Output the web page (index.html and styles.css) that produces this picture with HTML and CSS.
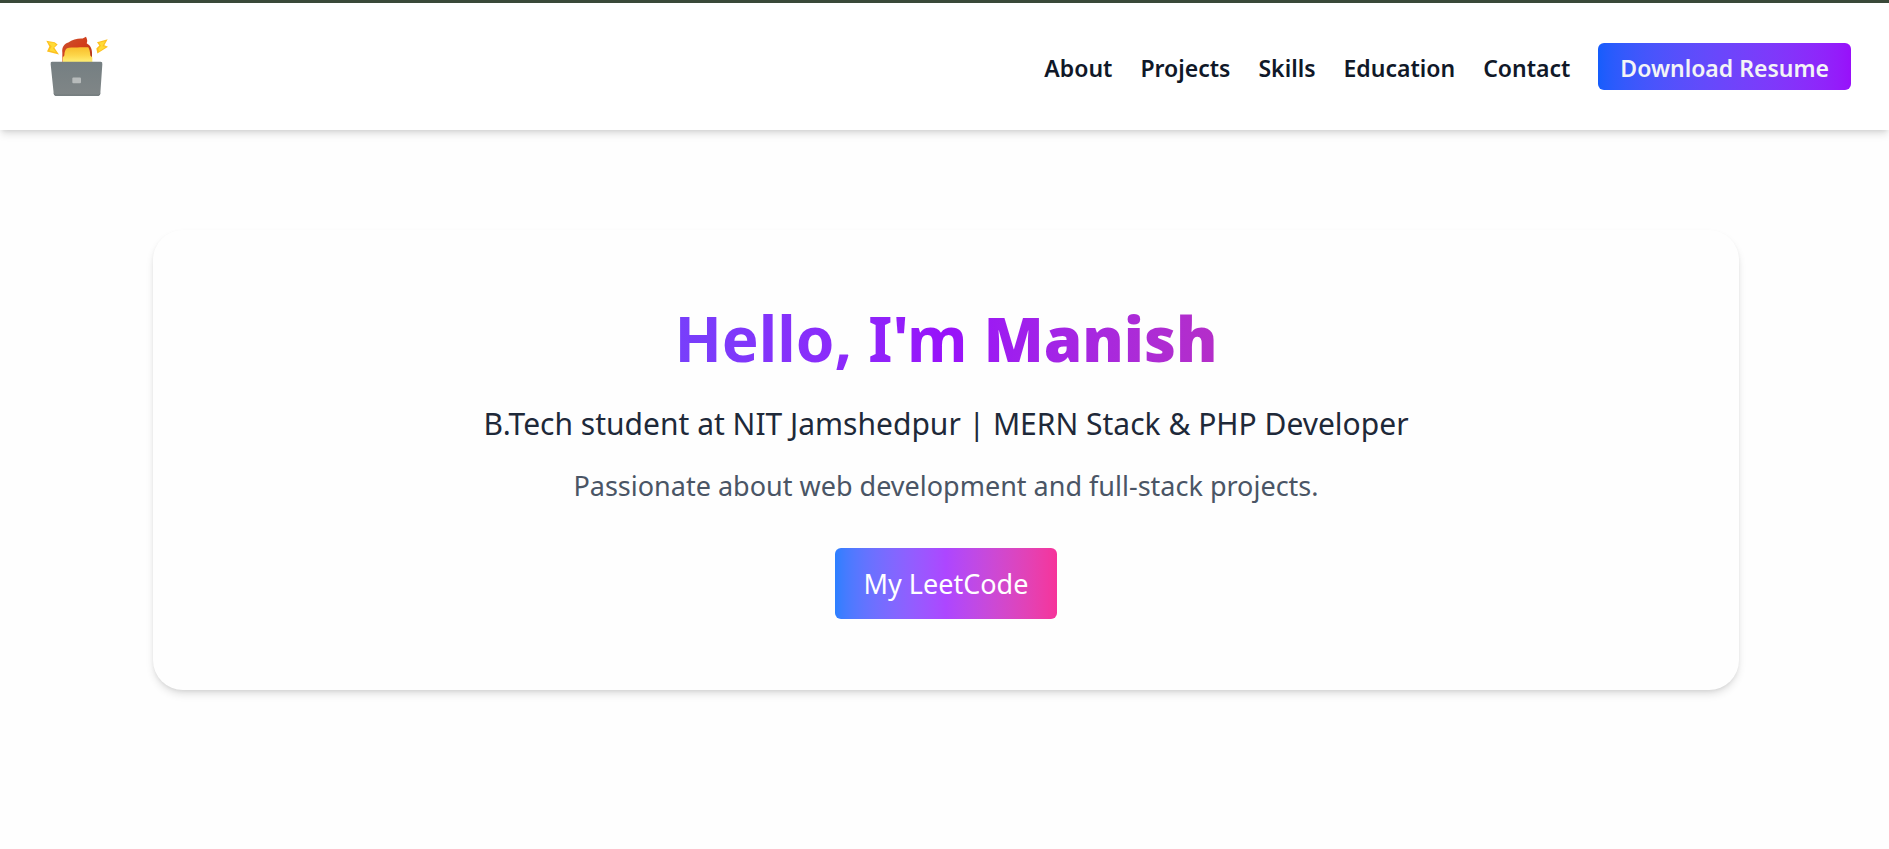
FILE: index.html
```html
<!DOCTYPE html>
<html lang="en">
<head>
<meta charset="utf-8">
<meta name="viewport" content="width=device-width, initial-scale=1">
<title>Manish | Portfolio</title>
<link rel="stylesheet" href="styles.css">
</head>
<body>
<header class="site-header">
  <a class="logo" href="#home" aria-label="Home">
    <svg class="logo-icon" viewBox="45 48 192 182" aria-hidden="true">
      <defs>
        <linearGradient id="face" x1="0" y1="0" x2="0" y2="1">
          <stop offset="0" stop-color="#f9bd2c"/>
          <stop offset=".5" stop-color="#fdd548"/>
          <stop offset="1" stop-color="#fff27a"/>
        </linearGradient>
        <linearGradient id="hair" x1="0" y1="0" x2="1" y2="1">
          <stop offset="0" stop-color="#c9532f"/>
          <stop offset=".5" stop-color="#d23c1a"/>
          <stop offset="1" stop-color="#a8371c"/>
        </linearGradient>
        <linearGradient id="laptop" x1="0" y1="0" x2="0" y2="1">
          <stop offset="0" stop-color="#757f82"/>
          <stop offset="1" stop-color="#808687"/>
        </linearGradient>
      </defs>
      <path d="M97 126V98c-2-18 6-27 18-31 12-10 30-13 43-12l10-5c4 8 5 14 2 19 11 7 16 15 16 29v26z" fill="url(#hair)"/>
      <path d="M98 128V112l5-6c0-11 3-19 8-22 14-4 46-2 64-3 4 6 5 14 6 25l6 6v16z" fill="url(#face)"/>
      <path d="M49 62l25 4 9 7-10 10 14 20-36-9 7-15z" fill="#fdc01f"/>
      <path d="M54 66l18 2 6 6-9 10 9 12-20-5 7-12z" fill="#ffdb36"/>
      <path d="M233 57l-32 9 7 10-9 9 3 15 32-20-11-5z" fill="#fdc01f"/>
      <path d="M226 63l-19 5 6 9-8 9 2 8 21-14-11-2z" fill="#ffdb36"/>
      <path d="M66 125h146q6 0 5 7l-6 87q-1 8-9 8H80q-8 0-9-8l-9-87q-1-7 4-7z" fill="url(#laptop)"/>
      <path d="M71 216q1 8 9 8h122q8 0 9-8v3q-1 8-9 8H80q-8 0-9-8z" fill="#6a7376"/>
      <rect x="127" y="172" width="26" height="17" rx="3" fill="#b7bbbb"/>
    </svg>
  </a>
  <nav class="nav" aria-label="Main">
    <a class="nav-link" href="#about">About</a>
    <a class="nav-link" href="#projects">Projects</a>
    <a class="nav-link" href="#skills">Skills</a>
    <a class="nav-link" href="#education">Education</a>
    <a class="nav-link" href="#contact">Contact</a>
    <a class="resume-button" href="#resume">Download Resume</a>
  </nav>
</header>
<main class="page">
  <section class="hero" id="home">
    <h1 class="hero-title">Hello, I'm <span class="hero-name">Manish</span></h1>
    <p class="hero-role">B.Tech student at NIT Jamshedpur | MERN Stack &amp; PHP Developer</p>
    <p class="hero-text">Passionate about web development and full-stack projects.</p>
    <a class="leetcode-button" href="#leetcode">My LeetCode</a>
  </section>
</main>
</body>
</html>
```

FILE: styles.css
```css
* {
  box-sizing: border-box;
}

body {
  min-height: 100vh;
  margin: 0;
  background: #fefefe;
  font-family: "Noto Sans", "Open Sans", sans-serif;
  color: #1e2939;
}

a {
  text-decoration: none;
}

.site-header {
  display: flex;
  align-items: center;
  justify-content: space-between;
  padding: 32px 38px 32px 45px;
  border-top: 3px solid #3a4939;
  background: #fff;
  box-shadow: 0 5px 8px -1px rgb(0 0 0 / 12%), 0 2px 5px -2px rgb(0 0 0 / 12%);
}

.logo-icon {
  display: block;
  width: 64px;
  height: 63px;
}

.nav {
  display: flex;
  align-items: center;
  gap: 28px;
  font-size: 23px;
  font-weight: 600;
  line-height: 36px;
}

.nav-link {
  padding: 7px 0 4px;
  color: #101828;
}

.resume-button {
  padding: 7px 22px 4px;
  border-radius: 6px;
  background: linear-gradient(to right in oklab, #155dfc, #9810fa);
  color: #f3f4f6;
}

.page {
  padding: 100px 150px 80px 153px;
}

.hero {
  padding: 64px 96px 71px;
  border-radius: 30px;
  background: #fefefe;
  box-shadow: 0 5px 8px -1px rgb(0 0 0 / 12%), 0 2px 5px -2px rgb(0 0 0 / 12%);
  text-align: center;
}

.hero-title {
  margin: 0 0 20px;
  background: linear-gradient(to right in oklab, #155dfc, #9810fa, #e60076);
  background-clip: text;
  color: transparent;
  font-size: 62px;
  font-weight: 700;
  line-height: 88px;
}

.hero-name {
  font-weight: 900;
}

.hero-role {
  margin: 0 0 20px;
  font-size: 30px;
  line-height: 44px;
}

.hero-text {
  margin: 0 0 42px;
  color: #4a5565;
  font-size: 27px;
  line-height: 40px;
}

.leetcode-button {
  display: inline-block;
  padding: 16px 29px 15px;
  border-radius: 6px;
  background: linear-gradient(to right in oklab, #2b7fff, #ad46ff, #f6339a);
  color: #fff;
  font-size: 27px;
  line-height: 40px;
}
```
